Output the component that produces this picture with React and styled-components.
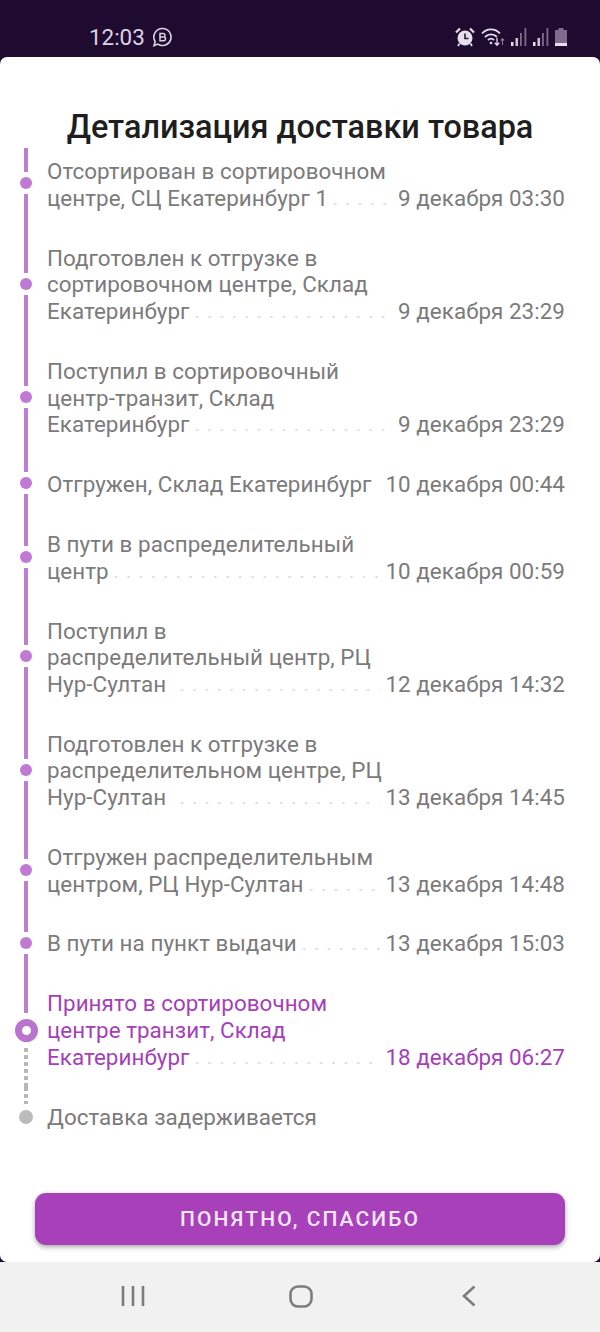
import React from "react";
import styled, { createGlobalStyle } from "styled-components";

const GlobalStyle = createGlobalStyle`
  html, body {
    margin: 0;
    padding: 0;
    background: #1f0a30;
  }
  * {
    box-sizing: border-box;
  }
`;

const steps = [
  { lines: ["Отсортирован в сортировочном", "центре, СЦ Екатеринбург 1"], date: "9 декабря 03:30" },
  { lines: ["Подготовлен к отгрузке в", "сортировочном центре, Склад", "Екатеринбург"], date: "9 декабря 23:29" },
  { lines: ["Поступил в сортировочный", "центр-транзит, Склад", "Екатеринбург"], date: "9 декабря 23:29" },
  { lines: ["Отгружен, Склад Екатеринбург"], date: "10 декабря 00:44", bare: true },
  { lines: ["В пути в распределительный", "центр"], date: "10 декабря 00:59" },
  { lines: ["Поступил в", "распределительный центр, РЦ", "Нур-Султан"], date: "12 декабря 14:32", wide: true },
  { lines: ["Подготовлен к отгрузке в", "распределительном центре, РЦ", "Нур-Султан"], date: "13 декабря 14:45", wide: true },
  { lines: ["Отгружен распределительным", "центром, РЦ Нур-Султан"], date: "13 декабря 14:48" },
  { lines: ["В пути на пункт выдачи"], date: "13 декабря 15:03" },
];

function App() {
  return (
    <Screen>
      <GlobalStyle />
      <StatusBar>
        <Clock>12:03</Clock>
        <BusinessIcon />
        <StatusIcons>
          <AlarmIcon />
          <WifiIcon />
          <SignalIcon />
          <SignalIcon />
          <BatteryIcon />
        </StatusIcons>
      </StatusBar>

      <Sheet>
        <Title>Детализация доставки товара</Title>
        <Timeline>
          {steps.map((step, i) => (
            <Step key={i}>
              <Rail>
                <Segment $kind="solid" />
                <Dot />
                <Segment $kind="solid" $extra={i === 0 ? 11 : 3} />
              </Rail>
              <StepText {...step} first={i === 0} />
            </Step>
          ))}
          <Step $active>
            <Rail>
              <Segment $kind="solid" />
              <ActiveDot />
              <Segment $kind="dashed" />
            </Rail>
            <StepText
              lines={["Принято в сортировочном", "центре транзит, Склад", "Екатеринбург"]}
              date="18 декабря 06:27"
            />
          </Step>
          <Step>
            <Rail>
              <Segment $kind="dashed" />
              <GrayDot />
              <Segment $extra={6} />
            </Rail>
            <Lines>
              <Line>Доставка задерживается</Line>
            </Lines>
          </Step>
        </Timeline>
        <OkButton>ПОНЯТНО, СПАСИБО</OkButton>
      </Sheet>

      <NavBar>
        <NavCell>
          <svg width="24" height="22" viewBox="0 0 24 22" fill="none" stroke="#7c7c7c" strokeWidth="2.6">
            <path d="M2 1v20M12 1v20M22 1v20" />
          </svg>
        </NavCell>
        <NavCell>
          <svg width="24" height="23" viewBox="0 0 24 23" fill="none" stroke="#7c7c7c" strokeWidth="2.6">
            <rect x="1.5" y="1.5" width="21" height="20" rx="7.5" />
          </svg>
        </NavCell>
        <NavCell>
          <svg width="14" height="22" viewBox="0 0 14 22" fill="none" stroke="#7c7c7c" strokeWidth="2.6">
            <path d="M12.5 1.5L2 11l10.5 9.5" />
          </svg>
        </NavCell>
      </NavBar>
    </Screen>
  );
}

function StepText({ lines, date, first, bare, wide }) {
  const last = lines[lines.length - 1];
  return (
    <Lines $first={first}>
      {lines.slice(0, -1).map((line) => (
        <Line key={line}>{line}</Line>
      ))}
      <Line>
        <span>{last}</span>
        <Leader $bare={bare} $wide={wide} />
        <span>{date}</span>
      </Line>
    </Lines>
  );
}

function BusinessIcon() {
  return (
    <svg width="21" height="21" viewBox="0 0 21 21" fill="none" stroke="#dcd3e3">
      <path d="M10.5 1.5a8.5 8.5 0 1 1-4.6 15.6L2 18.6l1.2-4A8.5 8.5 0 0 1 10.5 1.500z" strokeWidth="1.6" />
      <path d="M8 6.500h3.200a1.800 1.800 0 0 1 .6 3.500 1.900 1.900 0 0 1-.4 3.800H8z M8 10h3.400" strokeWidth="1.500" />
    </svg>
  );
}

function AlarmIcon() {
  return (
    <svg width="20" height="20" viewBox="0 0 20 20">
      <circle cx="10" cy="11" r="7.500" fill="#e6dfe9" />
      <path d="M10 6.500V11.500h3.500" fill="none" stroke="#2a1440" strokeWidth="1.600" />
      <path d="M1 5.500L5 1.500M19 5.500L15 1.500" stroke="#e6dfe9" strokeWidth="2.200" />
      <path d="M4.500 16.500L3 19M15.500 16.500L17 19" stroke="#e6dfe9" strokeWidth="1.800" />
    </svg>
  );
}

function WifiIcon() {
  return (
    <svg width="24" height="20" viewBox="0 0 24 20" fill="none" stroke="#e6dfe9" strokeWidth="1.800">
      <path d="M1 6.500C6 1 14 1 19 6.500" />
      <path d="M4 10c3.500-3.600 8.500-3.600 12 0" />
      <path d="M7 13c2-1.800 4-1.800 6 0" />
      <circle cx="10" cy="16" r="1.300" fill="#e6dfe9" stroke="none" />
      <path d="M16 11v7M13.800 15.800l2.200 2.400 2.200-2.400" strokeWidth="1.300" />
      <path d="M21.500 18v-6M19.800 13.500l1.700-1.800 1.700 1.800" strokeWidth="1.100" stroke="#8d7e9b" />
    </svg>
  );
}

function SignalIcon() {
  return (
    <svg width="16" height="18" viewBox="0 0 16 18">
      <rect x="0" y="14" width="2.500" height="4" fill="#e6dfe9" />
      <rect x="4.500" y="10" width="2.500" height="8" fill="#cfc5d6" />
      <rect x="9" y="5" width="1.800" height="13" fill="#7d6d8a" />
      <rect x="13.500" y="0" width="1.800" height="18" fill="#7d6d8a" />
    </svg>
  );
}

function BatteryIcon() {
  return (
    <svg width="12" height="18" viewBox="0 0 12 18">
      <path d="M3.500 0h5v2h3.500v16H0V2h3.500z" fill="#7d6d8a" />
      <rect x="0" y="15" width="12" height="3" fill="#e6dfe9" />
    </svg>
  );
}

export default App;

const Screen = styled.div`
  width: 600px;
  height: 1332px;
  display: flex;
  flex-direction: column;
  overflow: hidden;
  background: #1f0a30;
  font-family: Roboto, "Noto Sans", sans-serif;
`;

const StatusBar = styled.div`
  height: 57px;
  flex: none;
  display: flex;
  align-items: center;
  gap: 7px;
  padding: 17px 33px 0 89px;
`;

const Clock = styled.span`
  font-size: 22.4px;
  color: #dcd3e3;
`;

const StatusIcons = styled.div`
  margin-left: auto;
  display: flex;
  align-items: center;
  gap: 6px;
`;

const Sheet = styled.div`
  flex: 1;
  display: flex;
  flex-direction: column;
  background: #fff;
  border-radius: 7px;
  padding: 50px 35px 17px;
`;

const Title = styled.h1`
  margin: 0;
  height: 41px;
  line-height: 40px;
  font-size: 32.4px;
  font-weight: 500;
  color: #1e1e1e;
  text-align: center;
  white-space: nowrap;
`;

const Timeline = styled.div`
  display: flex;
  flex-direction: column;
  margin-left: -35px;
`;

const Step = styled.div`
  display: flex;
  align-items: stretch;
  color: ${(p) => (p.$active ? "#a53fb8" : "#7b7b7b")};
  padding-left: 11px;
`;

const Rail = styled.div`
  width: 30px;
  margin-right: 6px;
  flex: none;
  display: flex;
  flex-direction: column;
  align-items: center;
`;

const Segment = styled.div`
  flex: 1 1 ${(p) => p.$extra || 0}px;
  width: 4px;
  background: ${(p) =>
    p.$kind === "solid"
      ? "#bf7fd0"
      : p.$kind === "dashed"
      ? "repeating-linear-gradient(#b9b9b9 0 4px, transparent 4px 7px)"
      : "transparent"};
`;

const Dot = styled.div`
  width: 12px;
  height: 12px;
  margin: 5px 0;
  flex: none;
  border-radius: 50%;
  background: #c07ad3;
`;

const ActiveDot = styled.div`
  width: 23px;
  height: 23px;
  margin: 6px 0;
  flex: none;
  border-radius: 50%;
  background: #fff;
  border: 7px solid #bb74cd;
`;

const GrayDot = styled.div`
  width: 14px;
  height: 14px;
  margin: 6px 0 0;
  flex: none;
  border-radius: 50%;
  background: #bcbcbc;
`;

const Lines = styled.div`
  flex: 1;
  padding: ${(p) => (p.$first ? "10.2px" : "16.2px")} 0 17.2px;
  min-width: 0;
`;

const Line = styled.div`
  display: flex;
  height: 26.6px;
  line-height: 26.6px;
  font-size: 22.4px;
  letter-spacing: 0.05px;
  white-space: nowrap;
`;

const Leader = styled.span`
  flex: 1;
  margin: 0 5px 0 ${(p) => (p.$wide ? "14px" : "5px")};
  background: ${(p) =>
    p.$bare
      ? "none"
      : "radial-gradient(circle, #dcdcdc 1px, transparent 1.2px) -4px 17px / 12.400px 4px repeat-x"};
`;

const OkButton = styled.button`
  margin-top: auto;
  height: 52px;
  flex: none;
  border: none;
  border-radius: 11px;
  background: #a841b9;
  color: #f3e6f5;
  font-family: inherit;
  font-size: 21px;
  font-weight: 500;
  letter-spacing: 2.1px;
  box-shadow: 0 2px 5px rgba(0, 0, 0, 0.35);
`;

const NavBar = styled.div`
  height: 70px;
  flex: none;
  display: grid;
  grid-template-columns: repeat(3, 168px);
  justify-content: center;
  align-items: center;
  padding-left: 2px;
  background: #f1f1f1;
`;

const NavCell = styled.div`
  display: flex;
  justify-content: center;
  margin-top: -2px;
`;
